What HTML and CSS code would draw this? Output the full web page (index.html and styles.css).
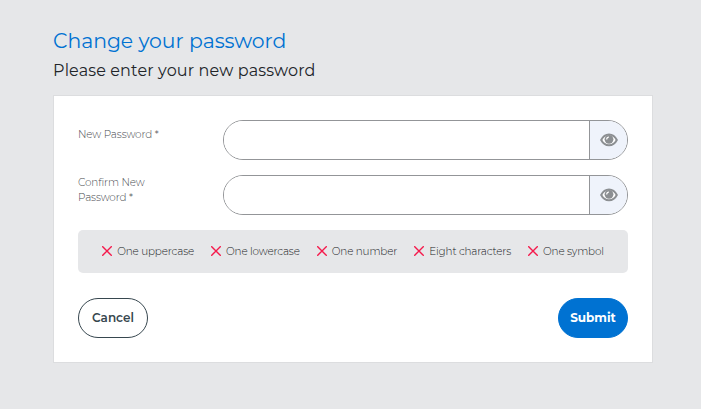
FILE: index.html
```html
<!DOCTYPE html>
<html lang="en">
<head>
    <meta charset="UTF-8">
    <meta name="viewport" content="width=device-width, initial-scale=1.0">
    <title>Change your password</title>
    <link rel="stylesheet" href="styles.css">
</head>
<body>
    <svg class="sprite" width="0" height="0">
        <symbol id="eye" viewBox="0 0 18 14">
            <path d="M1.200 7C4.800 -.4 13.200 -.4 16.800 7C13.200 14 4.800 14 1.200 7Z" fill="#fff" stroke="#8c8f92" stroke-width="2"/>
            <circle cx="9" cy="6.300" r="4.400" fill="#8c8f92"/>
            <path d="M6.700 6.500A2.400 2.400 0 0 1 9 4" fill="none" stroke="#fff" stroke-width="1.200"/>
        </symbol>
        <symbol id="cross" viewBox="0 0 10 10">
            <path d="M.2 .2L9.800 9.800M9.800 .2L.2 9.800" fill="none" stroke="#f5194b" stroke-width="1.400"/>
        </symbol>
    </svg>

    <main class="page">
        <h1 class="title">Change your password</h1>
        <p class="subtitle">Please enter your new password</p>

        <form class="card">
            <div class="row">
                <label class="label" for="newPassword">New Password *</label>
                <div class="field">
                    <input class="input" id="newPassword" type="password">
                    <button class="toggle" type="button"><svg width="18" height="14"><use href="#eye"/></svg></button>
                </div>
            </div>
            <div class="row">
                <label class="label" for="confirmPassword">Confirm New Password *</label>
                <div class="field">
                    <input class="input" id="confirmPassword" type="password">
                    <button class="toggle" type="button"><svg width="18" height="14"><use href="#eye"/></svg></button>
                </div>
            </div>

            <ul class="rules">
                <li class="rule"><svg width="10" height="10"><use href="#cross"/></svg><span>One uppercase</span></li>
                <li class="rule"><svg width="10" height="10"><use href="#cross"/></svg><span>One lowercase</span></li>
                <li class="rule"><svg width="10" height="10"><use href="#cross"/></svg><span>One number</span></li>
                <li class="rule"><svg width="10" height="10"><use href="#cross"/></svg><span>Eight characters</span></li>
                <li class="rule"><svg width="10" height="10"><use href="#cross"/></svg><span>One symbol</span></li>
            </ul>

            <div class="actions">
                <button class="button cancel" type="button">Cancel</button>
                <button class="button submit" type="button">Submit</button>
            </div>
        </form>
    </main>
</body>
</html>
```
FILE: styles.css
```css
* {
    box-sizing: border-box;
}

body {
    margin: 0;
    background: #e6e7e9;
    font-family: Montserrat, Inter, "Liberation Sans", sans-serif;
}

.sprite {
    display: block;
}

.page {
    width: 600px;
    margin-left: 53px;
    padding-top: 28px;
}

.title {
    margin: 0;
    font-size: 20.4px;
    font-weight: 400;
    line-height: 26px;
    letter-spacing: -0.04px;
    color: #0072d2;
}

.subtitle {
    margin: 6px 0 0;
    font-size: 16px;
    line-height: 22px;
    letter-spacing: 0.14px;
    color: #212529;
}

.card {
    height: 268px;
    margin-top: 13px;
    padding: 24px;
    background: #fff;
    border: 1px solid #dcdddf;
}

.row {
    display: flex;
    justify-content: space-between;
    margin-bottom: 15px;
}

.label {
    width: 90px;
    padding-top: 7px;
    font-size: 10.4px;
    font-weight: 300;
    line-height: 15px;
    letter-spacing: -0.12px;
    color: #484b50;
}

.row:nth-child(2) .label {
    padding-top: 0;
}

/* password input with show/hide button */
.field {
    display: flex;
    width: 405px;
    height: 40px;
    border: 1px solid #939598;
    border-radius: 20px;
    overflow: hidden;
}

.input {
    flex: 1;
    min-width: 0;
    border: 0;
    background: #fff;
}

.toggle {
    display: flex;
    align-items: center;
    justify-content: center;
    width: 38px;
    padding: 0;
    border: 0;
    border-left: 1px solid #939598;
    background: #eff3fb;
}

.rules {
    display: flex;
    justify-content: center;
    align-items: center;
    gap: 17px;
    height: 43px;
    margin: 0 0 25px;
    padding: 0 0 1px;
    border-radius: 5px;
    background: #e6e7e9;
    list-style: none;
}

.rule {
    display: flex;
    align-items: center;
    gap: 5px;
    font-size: 10.4px;
    font-weight: 300;
    line-height: 15px;
    letter-spacing: -0.14px;
    white-space: nowrap;
    color: #17191c;
}

.actions {
    display: flex;
    justify-content: space-between;
}

.button {
    width: 70px;
    height: 40px;
    padding: 0 0 2px;
    border: 1px solid #37474f;
    border-radius: 20px;
    background: #fff;
    font-family: inherit;
    font-size: 12px;
    font-weight: 600;
    color: #37474f;
}

.submit {
    border-color: #0072d2;
    background: #0072d2;
    font-weight: 700;
    color: #fff;
}
```
